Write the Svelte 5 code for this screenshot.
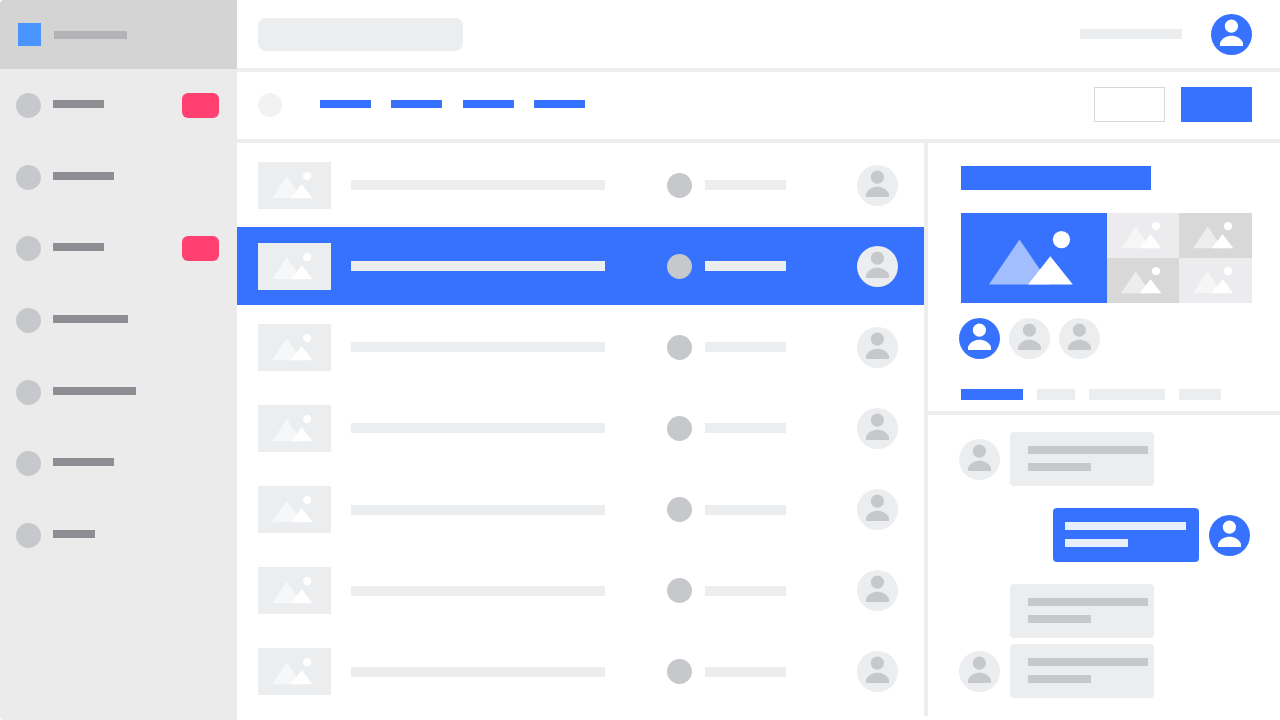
<script lang="ts">
  type Message = {
    own: boolean;
    avatar: boolean;
    close?: boolean;
  };

  const navItems = [
    { width: 51, badge: true },
    { width: 61, badge: false },
    { width: 51, badge: true },
    { width: 75, badge: false },
    { width: 83, badge: false },
    { width: 61, badge: false },
    { width: 42, badge: false }
  ];

  const rows = [0, 1, 2, 3, 4, 5, 6];
  const tabs = [62, 38, 76, 42];

  const messages: Message[] = [
    { own: false, avatar: true },
    { own: true, avatar: true },
    { own: false, avatar: false },
    { own: false, avatar: true, close: true }
  ];

  let selected = $state(1);
  let person = $state(0);
  let tab = $state(0);
</script>

{#snippet avatar(active: boolean)}
  <svg class="avatar" class:active viewBox="0 0 41 41" aria-hidden="true">
    <circle class="disc" cx="20.5" cy="20.5" r="20.5" />
    <circle cx="20.4" cy="12.1" r="6.6" />
    <path d="M9 31.9V28.8C11 24.2 15.8 21.8 20.5 21.8S30 24.2 32 28.8V31.9Z" />
  </svg>
{/snippet}

{#snippet picture()}
  <svg class="picture" viewBox="0 0 73 45" aria-hidden="true">
    <path opacity="0.54" d="M14 35.2L28.8 13.3L43.6 35.2Z" />
    <path d="M32.6 35.2L43.8 21.3L54.6 35.2Z" />
    <circle cx="49.2" cy="13.1" r="4.2" />
  </svg>
{/snippet}

<div class="app">
  <aside class="sidebar">
    <div class="brand">
      <span class="logo"></span>
      <span class="brand-name"></span>
    </div>
    <nav class="menu" aria-label="Main">
      {#each navItems as item}
        <a class="menu-item" href="#menu" aria-label="Menu item">
          <span class="dot"></span>
          <span class="menu-label" style="width: {item.width}px"></span>
          {#if item.badge}
            <span class="badge"></span>
          {/if}
        </a>
      {/each}
    </nav>
  </aside>

  <main>
    <header class="topbar">
      <input class="search" type="search" aria-label="Search" />
      <div class="user">
        <span class="user-name"></span>
        {@render avatar(true)}
      </div>
    </header>

    <div class="toolbar">
      <span class="toolbar-dot"></span>
      <nav class="links" aria-label="Sections">
        {#each [0, 1, 2, 3] as link}
          <a href="#section-{link}" aria-label="Section"></a>
        {/each}
      </nav>
      <div class="actions">
        <button class="action" aria-label="Cancel"></button>
        <button class="action primary" aria-label="Save"></button>
      </div>
    </div>

    <div class="content">
      <section class="list">
        {#each rows as row}
          <button
            class="row"
            class:selected={selected === row}
            aria-label="Open item"
            onclick={() => (selected = row)}
          >
            <span class="thumb">{@render picture()}</span>
            <span class="title"><span class="line"></span></span>
            <span class="status">
              <span class="dot"></span>
              <span class="line"></span>
            </span>
            {@render avatar(false)}
          </button>
        {/each}
      </section>

      <aside class="detail">
        <div class="summary">
          <div class="heading"></div>
          <div class="gallery">
            <div class="cover">
              <svg class="picture" viewBox="0 0 146 90" aria-hidden="true">
                <path opacity="0.54" d="M28 71.6L58.7 26.5L89.4 71.6Z" />
                <path d="M67.3 71.6L89.6 43.3L112.2 71.6Z" />
                <circle cx="100.8" cy="26.5" r="8.7" />
              </svg>
            </div>
            <div class="tile">{@render picture()}</div>
            <div class="tile dark">{@render picture()}</div>
            <div class="tile dark">{@render picture()}</div>
            <div class="tile">{@render picture()}</div>
          </div>
          <div class="people">
            {#each [0, 1, 2] as i}
              <button aria-label="Person" onclick={() => (person = i)}>
                {@render avatar(person === i)}
              </button>
            {/each}
          </div>
          <div class="tabs">
            {#each tabs as width, i}
              <button
                class:active={tab === i}
                style="width: {width}px"
                aria-label="Tab"
                onclick={() => (tab = i)}
              ></button>
            {/each}
          </div>
        </div>

        <div class="chat">
          {#each messages as message}
            <div class="message" class:own={message.own} class:close={message.close}>
              <div class="sender">
                {#if message.avatar}
                  {@render avatar(message.own)}
                {/if}
              </div>
              <div class="bubble">
                <span class="text"></span>
                <span class="text short"></span>
              </div>
            </div>
          {/each}
        </div>
      </aside>
    </div>
  </main>
</div>

<style>
  :global(body) {
    margin: 0;
    background: #fff;
    font-family: 'Liberation Sans', Arial, sans-serif;
  }

  .app,
  .app * {
    box-sizing: border-box;
  }

  .app {
    --blue: #3772ff;
    --light: #ecedef;
    --mid: #c7c8cc;
    display: flex;
    min-height: 100vh;
  }

  button {
    padding: 0;
    border: 0;
    background: none;
    cursor: pointer;
  }

  .avatar {
    display: block;
    flex: none;
    width: 41px;
    height: 41px;
    fill: var(--mid);
  }

  .avatar .disc {
    fill: var(--light);
  }

  .avatar.active {
    fill: #fff;
  }

  .avatar.active .disc {
    fill: var(--blue);
  }

  .picture {
    display: block;
    width: 100%;
    height: 100%;
    fill: #fff;
  }

  .dot {
    flex: none;
    width: 25px;
    height: 25px;
    border-radius: 50%;
    background: var(--mid);
  }

  .line {
    display: block;
    height: 10px;
    background: var(--light);
  }

  /* sidebar */
  .sidebar {
    flex: none;
    width: 237px;
    overflow: hidden;
    border-radius: 4px 0 0 4px;
    background: #ebebeb;
  }

  .brand {
    display: flex;
    align-items: center;
    gap: 13px;
    height: 69px;
    padding: 0 18px;
    background: #d4d4d4;
  }

  .logo {
    width: 23px;
    height: 23px;
    background: #4a94ff;
  }

  .brand-name {
    width: 73px;
    height: 8px;
    background: #b3b3b5;
  }

  .menu {
    display: flex;
    flex-direction: column;
    height: 501px;
    margin-top: 1px;
  }

  .menu-item {
    display: flex;
    flex: 1;
    align-items: center;
    gap: 12px;
    padding: 0 18px 0 16px;
  }

  .menu-label {
    height: 8px;
    margin-bottom: 3px;
    background: #8e8d93;
  }

  .badge {
    width: 37px;
    height: 25px;
    margin: 0 0 1px auto;
    border-radius: 6px;
    background: #ff4070;
  }

  /* top bars */
  main {
    display: flex;
    flex: 1;
    flex-direction: column;
    min-width: 0;
  }

  .topbar,
  .toolbar {
    display: flex;
    align-items: center;
    padding: 0 28px 0 21px;
    border-bottom: 4px solid var(--light);
  }

  .topbar {
    height: 72px;
    border-color: #eee;
  }

  .toolbar {
    height: 71px;
    padding-bottom: 2px;
  }

  .search {
    width: 205px;
    height: 33px;
    padding: 0 12px;
    border: 0;
    border-radius: 8px;
    background: var(--light);
  }

  .user {
    display: flex;
    align-items: center;
    gap: 29px;
    margin-left: auto;
  }

  .user-name {
    width: 102px;
    height: 10px;
    background: var(--light);
  }

  .toolbar-dot {
    width: 24px;
    height: 24px;
    border-radius: 50%;
    background: #f2f2f2;
  }

  .links {
    display: flex;
    justify-content: space-between;
    width: 265px;
    margin: 0 0 1px 38px;
  }

  .links a {
    width: 51px;
    height: 8px;
    background: var(--blue);
  }

  .actions {
    display: flex;
    gap: 16px;
    margin-left: auto;
  }

  .action {
    width: 71px;
    height: 35px;
    border: 1px solid #d8d8d8;
    background: #fff;
  }

  .action.primary {
    border-color: var(--blue);
    background: var(--blue);
  }

  /* item list */
  .content {
    display: flex;
    flex: 1;
    margin-bottom: 4px;
  }

  .list {
    display: flex;
    flex: 1;
    flex-direction: column;
    gap: 3px;
    height: 571px;
    min-width: 0;
    padding: 3px 0;
  }

  .row {
    display: flex;
    flex: 1;
    align-items: center;
    padding: 0 26px 0 21px;
  }

  .row.selected {
    background: var(--blue);
  }

  .thumb {
    flex: none;
    width: 73px;
    height: 47px;
    background: var(--light);
  }

  .title {
    flex: 1;
    padding-right: 62px;
    margin-left: 20px;
  }

  .status {
    display: flex;
    flex: none;
    align-items: center;
    gap: 13px;
    width: 190px;
  }

  .status .line {
    width: 81px;
  }

  /* detail panel */
  .detail {
    flex: none;
    width: 356px;
    border-left: 4px solid var(--light);
  }

  .summary {
    padding: 23px 28px 11px 33px;
    border-bottom: 4px solid var(--light);
  }

  .heading {
    width: 190px;
    height: 24px;
    background: var(--blue);
  }

  .gallery {
    display: grid;
    grid-template-columns: 2fr 1fr 1fr;
    grid-template-rows: 45px 45px;
    margin-top: 23px;
  }

  .cover {
    grid-row: span 2;
    background: var(--blue);
  }

  .tile {
    background: #ececee;
  }

  .tile.dark {
    background: #d8d8d8;
  }

  .people {
    display: flex;
    gap: 9px;
    margin: 15px 0 0 -2px;
  }

  .tabs {
    display: flex;
    gap: 14px;
    margin-top: 30px;
  }

  .tabs button {
    height: 11px;
    background: var(--light);
  }

  .tabs button.active {
    background: var(--blue);
  }

  .chat {
    padding: 17px 30px 0 31px;
  }

  .message {
    display: flex;
    align-items: center;
    gap: 10px;
    margin-bottom: 22px;
  }

  .message.own {
    flex-direction: row-reverse;
  }

  .message.close {
    margin: -16px 0 0;
  }

  .sender {
    flex: none;
    width: 41px;
  }

  .bubble {
    display: flex;
    flex-direction: column;
    gap: 9px;
    width: 144px;
    padding: 14px 6px 15px 18px;
    border-radius: 4px;
    background: var(--light);
  }

  .text {
    height: 8px;
    background: var(--mid);
  }

  .text.short {
    width: 63px;
  }

  .own .bubble {
    width: 146px;
    padding: 14px 13px 15px 12px;
    background: var(--blue);
  }

  .own .text {
    background: #e7effe;
  }
</style>
